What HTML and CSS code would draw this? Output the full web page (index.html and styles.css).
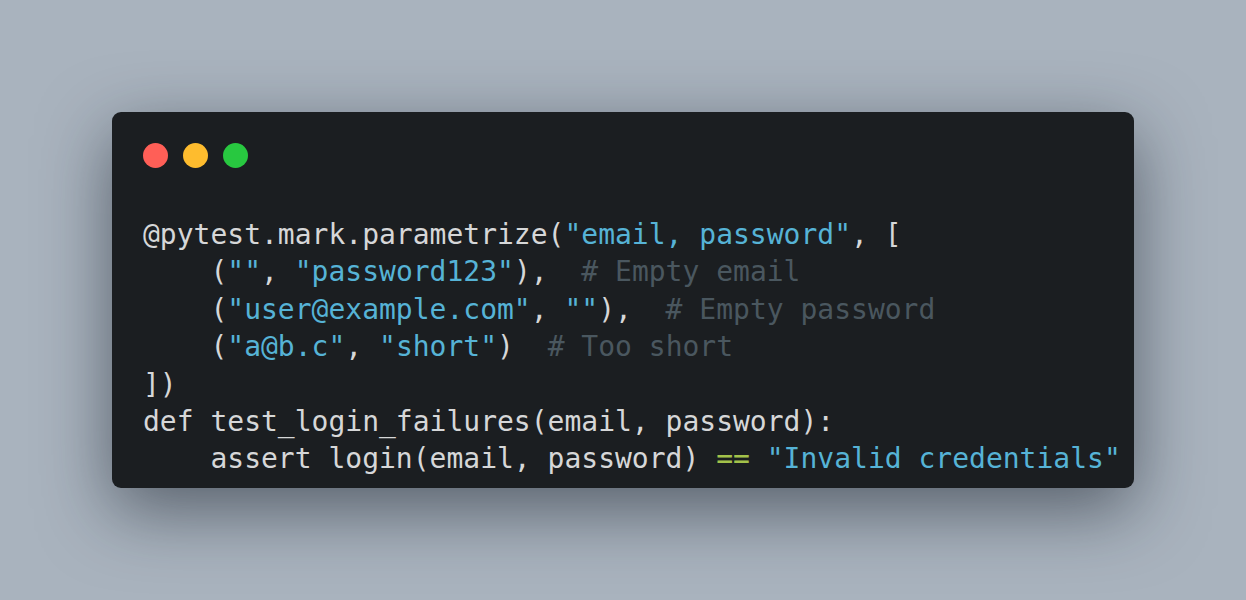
FILE: index.html
```html
<!DOCTYPE html>
<html>
<head>
<meta charset="utf-8">
<link rel="stylesheet" href="styles.css">
</head>
<body>
<div class="stage">
  <div class="window">
    <div class="dots">
      <span class="dot red"></span>
      <span class="dot yellow"></span>
      <span class="dot green"></span>
    </div>
<pre class="code">@pytest.mark.parametrize(<span class="s">"email, password"</span>, [
    (<span class="s">""</span>, <span class="s">"password123"</span>),  <span class="c"># Empty email</span>
    (<span class="s">"user@example.com"</span>, <span class="s">""</span>),  <span class="c"># Empty password</span>
    (<span class="s">"a@b.c"</span>, <span class="s">"short"</span>)  <span class="c"># Too short</span>
])
def test_login_failures(email, password):
    assert login(email, password) <span class="o">==</span> <span class="s">"Invalid credentials"</span></pre>
  </div>
</div>
</body>
</html>
```

FILE: styles.css
```css
html, body {
  margin: 0;
  padding: 0;
  height: 100%;
}
body {
  background: #a9b3be;
}
.stage {
  height: 600px;
  display: flex;
  align-items: center;
  justify-content: center;
}
.window {
  width: 1022px;
  height: 376px;
  box-sizing: border-box;
  background: #1b1e21;
  border-radius: 9px;
  padding: 31px 0 0 31px;
  box-shadow: 0 22px 70px rgba(20, 28, 38, 0.55);
}
.dots {
  display: flex;
  gap: 15px;
  height: 25px;
}
.dot {
  width: 25px;
  height: 25px;
  border-radius: 50%;
}
.red { background: #ff5f57; }
.yellow { background: #febc2e; }
.green { background: #28c840; }
.code {
  margin: 48px 0 0 0;
  font-family: "DejaVu Sans Mono", monospace;
  font-size: 28px;
  line-height: 37.4px;
  color: #d6d7d8;
  white-space: pre;
}
.s { color: #56b3d6; }
.c { color: #4a575f; }
.o { color: #a3c24a; }
```
